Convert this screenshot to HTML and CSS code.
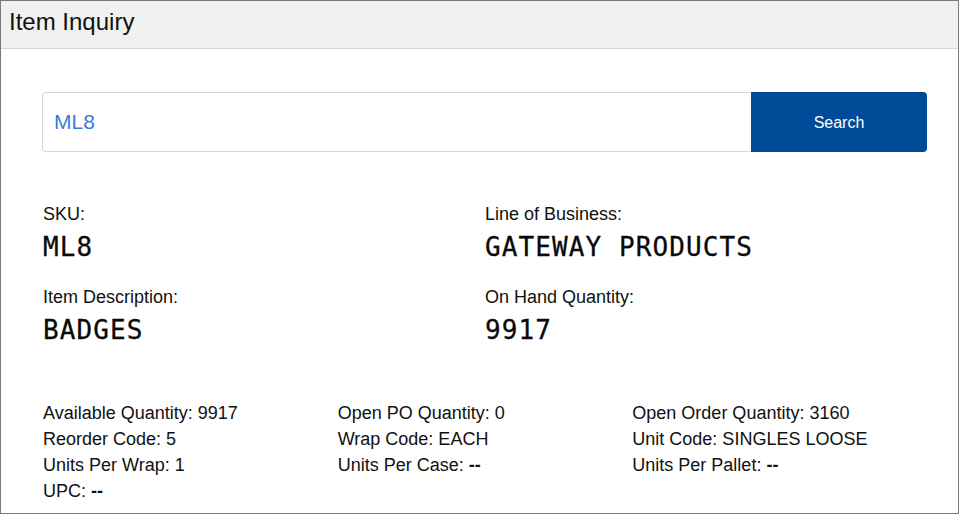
FILE: index.html
```html
<!DOCTYPE html>
<html>
<head>
<meta charset="utf-8">
<link rel="stylesheet" href="styles.css">
</head>
<body>
<div class="frame">
  <header class="header"><h1 class="title">Item Inquiry</h1></header>
  <main class="content">
    <form class="search">
      <input class="search-input" type="text" value="ML8">
      <button class="search-btn" type="button">Search</button>
    </form>
    <section class="primary">
      <div class="field">
        <div class="label">SKU:</div>
        <div class="value">ML8</div>
      </div>
      <div class="field">
        <div class="label">Line of Business:</div>
        <div class="value">GATEWAY PRODUCTS</div>
      </div>
      <div class="field">
        <div class="label">Item Description:</div>
        <div class="value">BADGES</div>
      </div>
      <div class="field">
        <div class="label">On Hand Quantity:</div>
        <div class="value">9917</div>
      </div>
    </section>
    <section class="details">
      <div class="col">
        <div class="row">Available Quantity: 9917</div>
        <div class="row">Reorder Code: 5</div>
        <div class="row">Units Per Wrap: 1</div>
        <div class="row">UPC: <b>--</b></div>
      </div>
      <div class="col">
        <div class="row">Open PO Quantity: 0</div>
        <div class="row">Wrap Code: EACH</div>
        <div class="row">Units Per Case: <b>--</b></div>
      </div>
      <div class="col">
        <div class="row">Open Order Quantity: 3160</div>
        <div class="row">Unit Code: SINGLES LOOSE</div>
        <div class="row">Units Per Pallet: <b>--</b></div>
      </div>
    </section>
  </main>
</div>
</body>
</html>
```
FILE: styles.css
```css
* { box-sizing: border-box; }
html, body { margin: 0; padding: 0; background: #fff; }
body {
  font-family: "Liberation Sans", Arial, sans-serif;
  color: #111;
}
.frame {
  width: 959px;
  height: 514px;
  border: 1px solid #7a7a7a;
  overflow: hidden;
  display: flex;
  flex-direction: column;
}
.header {
  height: 48px;
  background: #f0f0f0;
  border-bottom: 1px solid #d6d6d6;
  padding-left: 8px;
  display: flex;
  align-items: flex-start;
}
.title {
  margin: 0;
  margin-top: 7px;
  font-size: 24px;
  font-weight: normal;
  line-height: 28px;
  color: #111;
}
.content {
  padding: 43px 31px 0 41px;
}
.search {
  display: flex;
  height: 60px;
  margin: 0;
}
.search-input {
  flex: 1;
  height: 60px;
  border: 1px solid #d8d8d8;
  border-right: none;
  border-radius: 4px 0 0 4px;
  padding: 0 11px;
  font-family: "Liberation Sans", Arial, sans-serif;
  font-size: 21px;
  color: #3b7dd4;
  outline: none;
  background: #fff;
}
.search-btn {
  width: 176px;
  height: 60px;
  border: none;
  border-radius: 0 4px 4px 0;
  background: #004b98;
  color: #fff;
  font-family: "Liberation Sans", Arial, sans-serif;
  font-size: 16px;
  padding: 2px 0 0;
}
.primary {
  display: grid;
  grid-template-columns: 1fr 1fr;
  margin-top: 52px;
  padding-left: 1px;
}
.field {
  margin-bottom: 24px;
}
.label {
  font-size: 18px;
  line-height: 20px;
  margin-bottom: 7px;
}
.value {
  font-family: "DejaVu Sans Mono", "Liberation Mono", monospace;
  font-size: 26px;
  line-height: 32px;
  letter-spacing: 1.1px;
  color: #0a0a0a;
  -webkit-text-stroke: 0.3px #0a0a0a;
}
.details {
  display: grid;
  grid-template-columns: 1fr 1fr 1fr;
  margin-top: 30px;
  padding-left: 1px;
}
.row {
  font-size: 18px;
  line-height: 26px;
}
.row b { font-weight: bold; }
```
